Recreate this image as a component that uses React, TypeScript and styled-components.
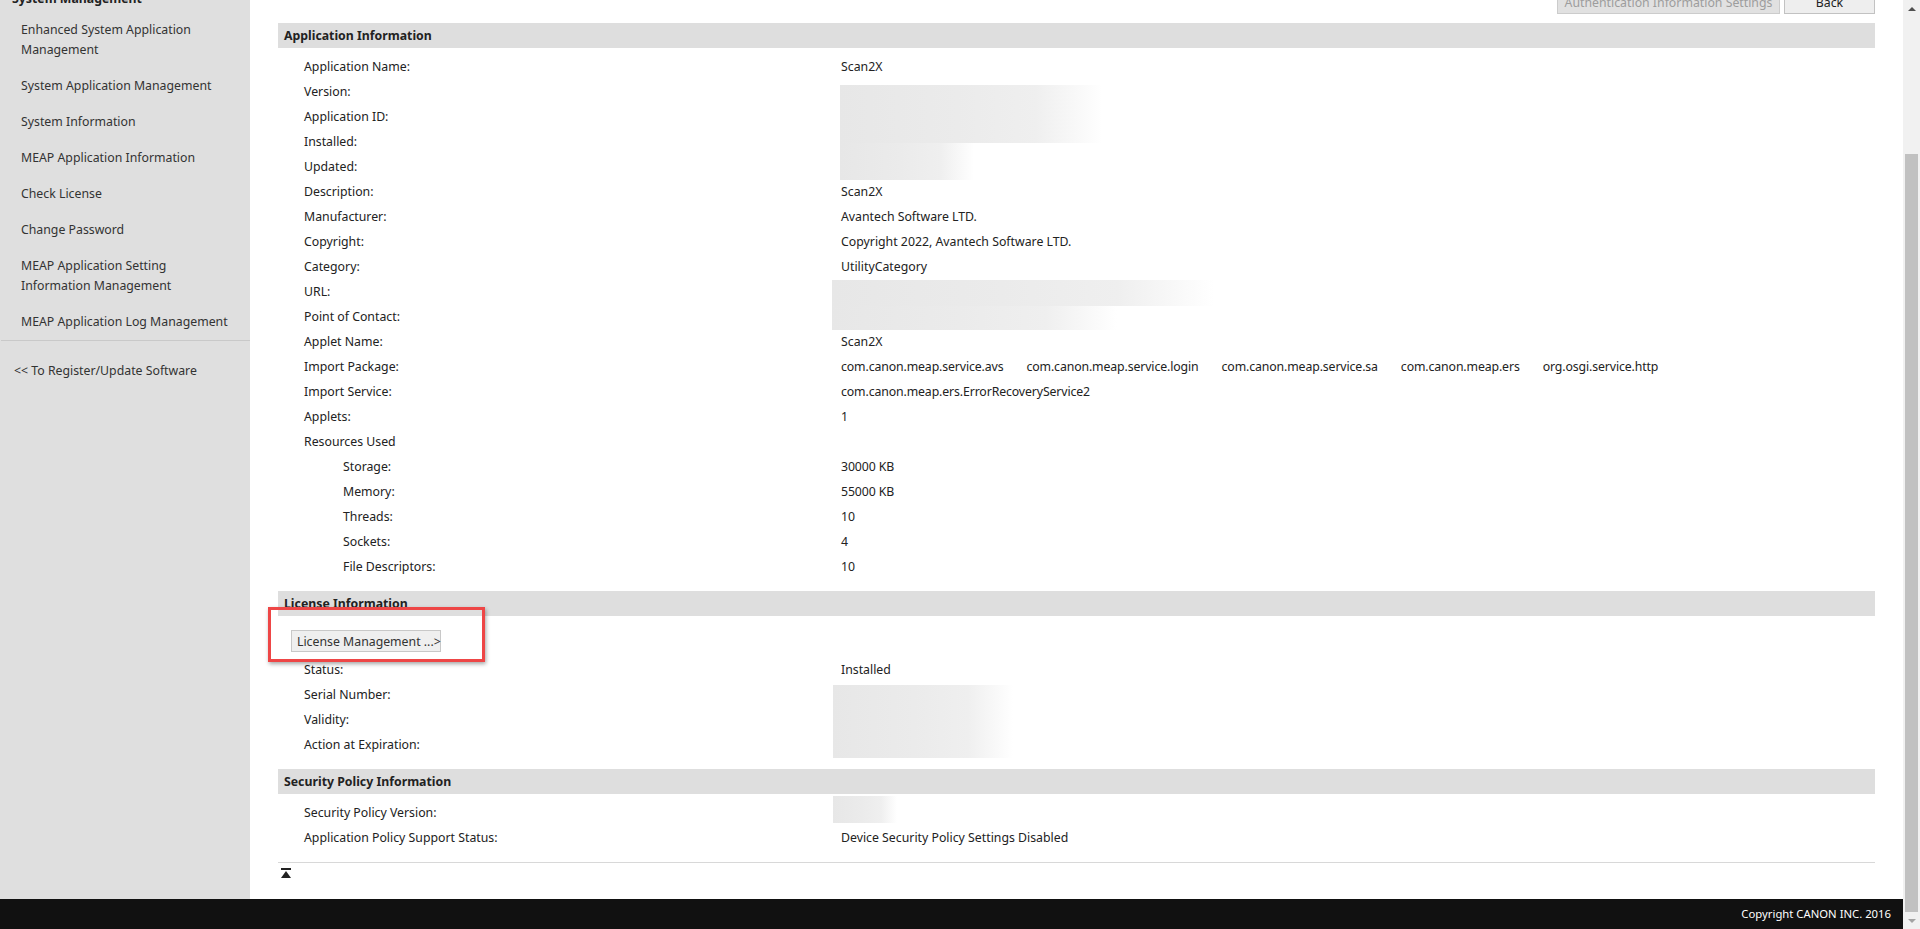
import React from 'react';
import styled, { createGlobalStyle } from 'styled-components';

const GlobalStyle = createGlobalStyle`
  html, body {
    margin: 0;
    padding: 0;
    height: 100%;
    overflow: hidden;
    background: #fff;
  }
  body {
    font-family: "Noto Sans", "Open Sans", sans-serif;
    font-size: 12.3px;
    color: #222;
  }
  #root { height: 100%; }
`;

const menuItems = [
  'Enhanced System Application Management',
  'System Application Management',
  'System Information',
  'MEAP Application Information',
  'Check License',
  'Change Password',
  'MEAP Application Setting Information Management',
  'MEAP Application Log Management',
];

const importPackages = [
  'com.canon.meap.service.avs',
  'com.canon.meap.service.login',
  'com.canon.meap.service.sa',
  'com.canon.meap.ers',
  'org.osgi.service.http',
];

const resources = [
  ['Storage:', '30000 KB'],
  ['Memory:', '55000 KB'],
  ['Threads:', '10'],
  ['Sockets:', '4'],
  ['File Descriptors:', '10'],
];

const ToTopIcon = () => (
  <svg width="10" height="10" viewBox="0 0 10 10">
    <rect x="0" y="0" width="10" height="2" fill="#222" />
    <polygon points="5,3 10,10 0,10" fill="#222" />
  </svg>
);

const App = () => {
  return (
    <>
      <GlobalStyle />
      <Frame>
        <Viewport>
          <Scroller>
            <Page>
              <Sidebar>
                <SideHeading>System Management</SideHeading>
                {menuItems.map((item) => (
                  <MenuItem key={item}>{item}</MenuItem>
                ))}
                <SideDivider />
                <BackLink>&lt;&lt; To Register/Update Software</BackLink>
              </Sidebar>

              <Main>
                <ButtonBar>
                  <TopButton $disabled $width={223}>Authentication Information Settings</TopButton>
                  <TopButton $width={91}>Back</TopButton>
                </ButtonBar>

                <Section>
                  <SectionBar>Application Information</SectionBar>
                  <InfoGrid>
                    <Label>Application Name:</Label>
                    <Value>Scan2X</Value>
                    <Label>Version:</Label>
                    <Redacted $rows={4} $top={6}>
                      <Patch $w={262} $h={58} />
                      <Patch $w={134} $h={37} />
                    </Redacted>
                    <Label>Application ID:</Label>
                    <Label>Installed:</Label>
                    <Label>Updated:</Label>
                    <Label>Description:</Label>
                    <Value>Scan2X</Value>
                    <Label>Manufacturer:</Label>
                    <Value>Avantech Software LTD.</Value>
                    <Label>Copyright:</Label>
                    <Value>Copyright 2022, Avantech Software LTD.</Value>
                    <Label>Category:</Label>
                    <Value>UtilityCategory</Value>
                    <Label>URL:</Label>
                    <Redacted $rows={2} $top={1} $left={-9}>
                      <Patch $w={382} $h={26} />
                      <Patch $w={285} $h={24} />
                    </Redacted>
                    <Label>Point of Contact:</Label>
                    <Label>Applet Name:</Label>
                    <Value>Scan2X</Value>
                    <Label>Import Package:</Label>
                    <Value $narrow>
                      <PackageList>
                        {importPackages.map((p) => (
                          <span key={p}>{p}</span>
                        ))}
                      </PackageList>
                    </Value>
                    <Label>Import Service:</Label>
                    <Value $narrow>com.canon.meap.ers.ErrorRecoveryService2</Value>
                    <Label>Applets:</Label>
                    <Value>1</Value>
                    <Label>Resources Used</Label>
                    {resources.map(([k, v]) => (
                      <React.Fragment key={k}>
                        <Label $sub>{k}</Label>
                        <Value $narrow>{v}</Value>
                      </React.Fragment>
                    ))}
                  </InfoGrid>
                </Section>

                <Section>
                  <SectionBar>License Information</SectionBar>
                  <LicenseButton>License Management ...&gt;</LicenseButton>
                  <InfoGrid $flush>
                    <Label>Status:</Label>
                    <Value>Installed</Value>
                    <Label>Serial Number:</Label>
                    <Redacted $rows={3} $top={3} $left={-8}>
                      <Patch $w={180} $h={73} />
                    </Redacted>
                    <Label>Validity:</Label>
                    <Label>Action at Expiration:</Label>
                  </InfoGrid>
                  <Annotation />
                </Section>

                <Section>
                  <SectionBar>Security Policy Information</SectionBar>
                  <InfoGrid>
                    <Label>Security Policy Version:</Label>
                    <Redacted $rows={1} $top={-4} $left={-8}>
                      <Patch $w={64} $h={27} />
                    </Redacted>
                    <Label>Application Policy Support Status:</Label>
                    <Value>Device Security Policy Settings Disabled</Value>
                  </InfoGrid>
                </Section>

                <BottomRule />
                <TopLink>
                  <ToTopIcon />
                </TopLink>
              </Main>
            </Page>
          </Scroller>
          <Footer>Copyright CANON INC. 2016</Footer>
        </Viewport>

        <Scrollbar>
          <ScrollArrow $dir="up" />
          <Track>
            <Thumb />
          </Track>
          <ScrollArrow $dir="down" />
        </Scrollbar>
      </Frame>
    </>
  );
};

export default App;

const Frame = styled.div`
  display: flex;
  width: 100vw;
  height: 100vh;
`;

const Viewport = styled.div`
  flex: 1;
  min-width: 0;
  display: flex;
  flex-direction: column;
`;

const Scroller = styled.div`
  flex: 1;
  overflow: hidden;
  display: flex;
  flex-direction: column;
`;

/* page is scrolled to the bottom: the top 30px are out of view */
const Page = styled.div`
  flex: 1;
  display: flex;
  margin-top: -30px;
`;

const Sidebar = styled.nav`
  width: 250px;
  flex-shrink: 0;
  background: #dfdfdf;
  color: #333;
  line-height: 20px;
`;

const SideHeading = styled.div`
  padding: 19px 12px 3px 12px;
  font-weight: bold;
  color: #222;
`;

const MenuItem = styled.div`
  padding: 8px 22px 8px 21px;
`;

const SideDivider = styled.div`
  border-top: 1px solid #c9c9c9;
  margin-left: 1px;
`;

const BackLink = styled.div`
  padding: 20px 12px 0 14px;
`;

const Main = styled.main`
  flex: 1;
  min-width: 0;
  padding: 20px 28px 0 28px;
  display: flex;
  flex-direction: column;
`;

const ButtonBar = styled.div`
  display: flex;
  justify-content: flex-end;
  gap: 4px;
  margin-bottom: 9px;
`;

const TopButton = styled.div<{ $disabled?: boolean; $width: number }>`
  height: 24px;
  box-sizing: border-box;
  width: ${(p) => p.$width}px;
  display: flex;
  align-items: center;
  justify-content: center;
  white-space: nowrap;
  border: 1px solid ${(p) => (p.$disabled ? '#cccccc' : '#c2c2c2')};
  background: ${(p) => (p.$disabled ? '#e1e1e1' : '#eeeeee')};
  color: ${(p) => (p.$disabled ? '#9d9d9d' : '#222')};
  font-size: 12.3px;
`;

const Section = styled.section`
  position: relative;
  margin-bottom: 12px;
`;

const SectionBar = styled.div`
  height: 25px;
  line-height: 25px;
  padding-left: 6px;
  background: #dedede;
  font-weight: bold;
  color: #222;
`;

const InfoGrid = styled.div<{ $flush?: boolean }>`
  display: grid;
  grid-template-columns: 563px 1fr;
  grid-auto-rows: 25px;
  align-items: center;
  margin-top: ${(p) => (p.$flush ? '5px' : '6px')};
`;

const Label = styled.div<{ $sub?: boolean }>`
  grid-column: 1;
  padding-left: ${(p) => (p.$sub ? '65px' : '26px')};
  white-space: nowrap;
`;

const Value = styled.div<{ $narrow?: boolean }>`
  grid-column: 2;
  white-space: nowrap;
  letter-spacing: ${(p) => (p.$narrow ? '-0.12px' : 'normal')};
`;

const PackageList = styled.div`
  display: flex;
  gap: 23px;
`;

const Redacted = styled.div<{ $rows: number; $top: number; $left?: number }>`
  grid-column: 2;
  grid-row: span ${(p) => p.$rows};
  align-self: start;
  margin-top: ${(p) => p.$top}px;
  margin-left: ${(p) => p.$left ?? -1}px;
  display: flex;
  flex-direction: column;
`;

const Patch = styled.div<{ $w: number; $h: number }>`
  width: ${(p) => p.$w}px;
  height: ${(p) => p.$h}px;
  background: linear-gradient(
    90deg,
    #e7e7e7 0%,
    #ebebeb 45%,
    #efefef 75%,
    rgba(255, 255, 255, 0) 100%
  );
`;

const LicenseButton = styled.div`
  align-self: flex-start;
  display: inline-flex;
  align-items: center;
  height: 22px;
  box-sizing: border-box;
  margin: 14px 0 0 13px;
  padding: 0 5px;
  width: 150px;
  border: 1px solid #c8c8c8;
  background: #efefef;
  color: #333;
  white-space: nowrap;
`;

const Annotation = styled.div`
  position: absolute;
  left: -10px;
  top: 16px;
  width: 217px;
  height: 55px;
  box-sizing: border-box;
  border: 3px solid #ee4646;
  box-shadow: 1px 2px 4px rgba(0, 0, 0, 0.35);
  pointer-events: none;
`;

const BottomRule = styled.div`
  border-top: 1px solid #d8d8d8;
`;

const TopLink = styled.div`
  margin: 5px 0 0 3px;
  height: 10px;
  display: flex;
`;

const Footer = styled.footer`
  height: 30px;
  flex-shrink: 0;
  background: #111;
  color: #fff;
  line-height: 30px;
  text-align: right;
  padding-right: 12px;
  font-size: 11.3px;
`;

const Scrollbar = styled.div`
  width: 17px;
  flex-shrink: 0;
  background: #f1f1f1;
  display: flex;
  flex-direction: column;
`;

const ScrollArrow = styled.div<{ $dir: 'up' | 'down' }>`
  height: 17px;
  display: flex;
  align-items: center;
  justify-content: center;
  &::before {
    content: '';
    width: 0;
    height: 0;
    border-left: 4px solid transparent;
    border-right: 4px solid transparent;
    ${(p) =>
      p.$dir === 'up'
        ? 'border-bottom: 4px solid #505050;'
        : 'border-top: 4px solid #a3a3a3;'}
  }
`;

const Track = styled.div`
  flex: 1;
  display: flex;
  flex-direction: column;
  justify-content: flex-end;
`;

const Thumb = styled.div`
  height: 758px;
  margin: 0 2px;
  background: #c1c1c1;
`;
